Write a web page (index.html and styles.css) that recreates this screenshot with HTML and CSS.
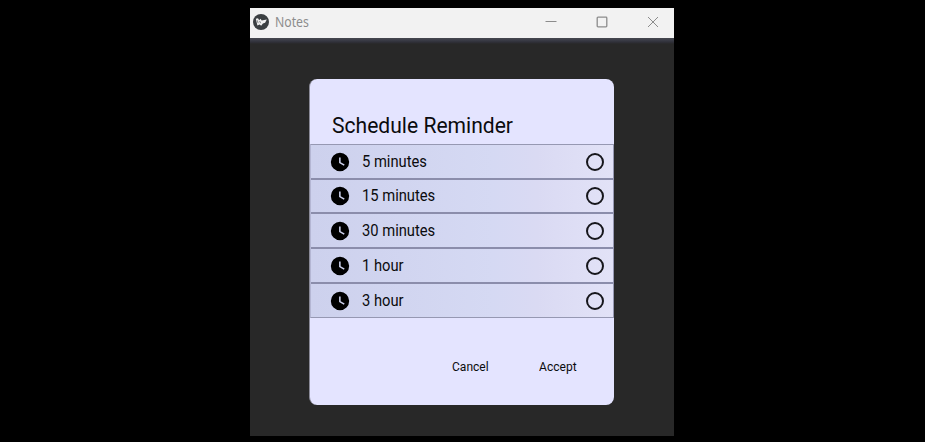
FILE: index.html
```
<!DOCTYPE html>
<html lang="en">
<head>
<meta charset="utf-8">
<title>Notes</title>
<link rel="stylesheet" href="styles.css">
</head>
<body>
<svg width="0" height="0" class="defs" aria-hidden="true">
  <symbol id="clock" viewBox="0 0 24 24"><path d="M12 2a10 10 0 1 0 0 20 10 10 0 0 0 0-20zm4.2 14.2L11 13V7h1.7v5.2l4.4 2.6-.9 1.4z"/></symbol>
</svg>
<main class="window">
  <header class="titlebar">
    <svg class="logo" viewBox="0 0 16 16"><circle cx="8" cy="8" r="8" fill="#3b3f42"/><path d="M2.8 4.8 5 4.2l1.2 2L7.5 4.8l1.2 1.6 5.1-.8-1.7 3.1-2.2.8-1.7 2.3-1.6-1.4-2.2 1z" fill="#f2f2f2"/><path d="m4.3 6.3.8 2.9m1.5-2.2 1 2.2" stroke="#3b3f42" stroke-width=".6"/></svg>
    <span class="app-name">Notes</span>
    <div class="controls">
      <svg viewBox="0 0 12 12"><path d="M.5 5.5h11"/></svg>
      <svg viewBox="0 0 12 12"><rect x="1.2" y="1.2" width="9.6" height="9.6" rx=".8" stroke-width="1.3"/></svg>
      <svg viewBox="0 0 12 12"><path d="m1 1 10 10M11 1 1 11"/></svg>
    </div>
  </header>
  <section class="content">
    <div class="dialog">
      <h1>Schedule Reminder</h1>
      <ul class="options">
        <li><svg class="clock"><use href="#clock"/></svg><span class="label">5 minutes</span><i class="radio"></i></li>
        <li><svg class="clock"><use href="#clock"/></svg><span class="label">15 minutes</span><i class="radio"></i></li>
        <li><svg class="clock"><use href="#clock"/></svg><span class="label">30 minutes</span><i class="radio"></i></li>
        <li><svg class="clock"><use href="#clock"/></svg><span class="label">1 hour</span><i class="radio"></i></li>
        <li><svg class="clock"><use href="#clock"/></svg><span class="label">3 hour</span><i class="radio"></i></li>
      </ul>
      <footer class="actions"><span class="action">Cancel</span><span class="action">Accept</span></footer>
    </div>
  </section>
</main>
</body>
</html>
```
FILE: styles.css
```
* { box-sizing: border-box; }
body {
  margin: 0;
  height: 442px;
  padding: 8px 0 0 250px;
  overflow: hidden;
  background: #000;
  font-family: Roboto, sans-serif;
  color: #0b0b0d;
}
.defs { display: block; height: 0; }
.window { width: 424px; height: 428px; background: #282828; }
.titlebar {
  display: flex;
  align-items: center;
  height: 30px;
  padding: 0 15px 2px 3px;
  background: #f2f2f2;
}
.logo { width: 16px; height: 16px; margin-right: 6px; }
.app-name {
  font: 13.6px/20px "Noto Sans", sans-serif;
  color: #8c8c8c;
  transform: scaleX(.9);
  transform-origin: left;
}
.controls { display: flex; gap: 39px; margin-left: auto; }
.controls svg { width: 12px; height: 12px; fill: none; stroke: #8c8c8c; stroke-width: 1; }
.content {
  height: 398px;
  padding: 41px 60px 0 59px;
  background: linear-gradient(#46484f 0, #3c3e48 2px, #30313a 4px, #282828 6px);
}
.dialog {
  height: 326px;
  border-left: 1px solid #8a8a98;
  border-radius: 8px;
  overflow: hidden;
  background: #e4e4ff;
}
h1 {
  margin: 0;
  height: 65px;
  padding: 32px 0 0 23px;
  font-size: 22px;
  line-height: 29px;
  font-weight: 400;
  white-space: nowrap;
  transform: scaleX(.958);
  transform-origin: left;
}
.options {
  display: grid;
  grid-template-rows: 35px 34px 35px 35px 33px;
  height: 174px;
  margin: 0;
  padding: 0;
  list-style: none;
  border: 1px solid #9698b2;
  border-left-color: #b4b6d3;
  background: linear-gradient(90deg, #cdd1ed 0%, #d5d9f3 60%, #dadaf3 75%, #e2e2f7 100%);
}
.options li {
  display: flex;
  align-items: center;
  padding: 0 9px 0 18px;
  font-size: 15.6px;
}
.options li:not(:last-child) { border-bottom: 2px solid #8b8dab; }
.label { transform: scaleX(.945); transform-origin: left; }
.clock { width: 22px; height: 22px; margin-right: 11px; fill: #000; }
.radio {
  width: 18px;
  height: 18px;
  margin-left: auto;
  border: 2px solid #17171c;
  border-radius: 50%;
}
.actions {
  display: flex;
  justify-content: flex-end;
  gap: 45.5px;
  padding: 39px 37.5px 0 0;
  font-size: 13.7px;
  line-height: 18px;
}
.action { transform: scaleX(.88); transform-origin: right; }
```
